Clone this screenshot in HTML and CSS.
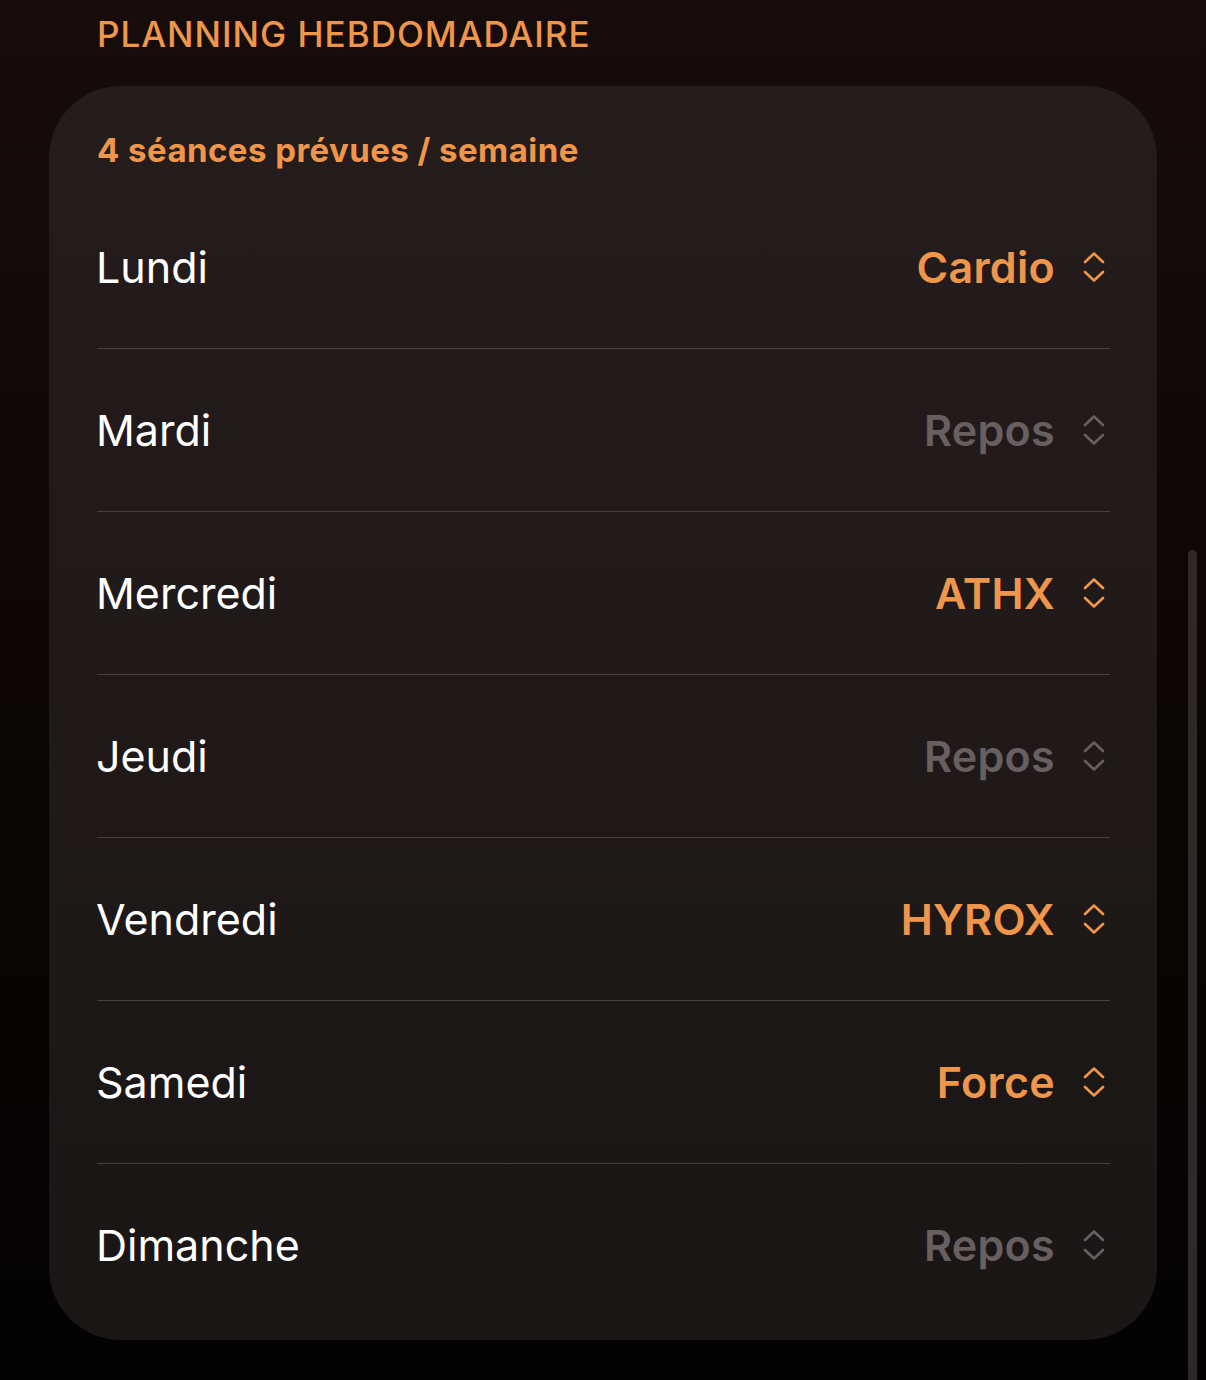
FILE: index.html
```html
<!DOCTYPE html>
<html lang="fr">
<head>
  <meta charset="UTF-8">
  <meta name="viewport" content="width=device-width, initial-scale=1.0">
  <title>Planning hebdomadaire</title>
  <link rel="stylesheet" href="styles.css">
</head>
<body>
  <h2 class="section-title">PLANNING HEBDOMADAIRE</h2>

  <div class="card">
    <p class="summary">4 séances prévues / semaine</p>

    <div class="row">
      <span class="day">Lundi</span>
      <span class="pick active">Cardio
        <svg class="updown" viewBox="0 0 22 30"><path d="M2 10 L11 1.5 L20 10 M2 20 L11 28.5 L20 20"/></svg>
      </span>
    </div>
    <div class="row">
      <span class="day">Mardi</span>
      <span class="pick">Repos
        <svg class="updown" viewBox="0 0 22 30"><path d="M2 10 L11 1.5 L20 10 M2 20 L11 28.5 L20 20"/></svg>
      </span>
    </div>
    <div class="row">
      <span class="day">Mercredi</span>
      <span class="pick active">ATHX
        <svg class="updown" viewBox="0 0 22 30"><path d="M2 10 L11 1.5 L20 10 M2 20 L11 28.5 L20 20"/></svg>
      </span>
    </div>
    <div class="row">
      <span class="day">Jeudi</span>
      <span class="pick">Repos
        <svg class="updown" viewBox="0 0 22 30"><path d="M2 10 L11 1.5 L20 10 M2 20 L11 28.5 L20 20"/></svg>
      </span>
    </div>
    <div class="row">
      <span class="day">Vendredi</span>
      <span class="pick active">HYROX
        <svg class="updown" viewBox="0 0 22 30"><path d="M2 10 L11 1.5 L20 10 M2 20 L11 28.5 L20 20"/></svg>
      </span>
    </div>
    <div class="row">
      <span class="day">Samedi</span>
      <span class="pick active">Force
        <svg class="updown" viewBox="0 0 22 30"><path d="M2 10 L11 1.5 L20 10 M2 20 L11 28.5 L20 20"/></svg>
      </span>
    </div>
    <div class="row">
      <span class="day">Dimanche</span>
      <span class="pick">Repos
        <svg class="updown" viewBox="0 0 22 30"><path d="M2 10 L11 1.5 L20 10 M2 20 L11 28.5 L20 20"/></svg>
      </span>
    </div>
  </div>

  <div class="scrollbar"></div>
</body>
</html>
```

FILE: styles.css
```css
html, body {
    height: 100%;
}

body {
    font-family: Inter, "Noto Sans", sans-serif;
    background: linear-gradient(#170c0c, #0a0505 60%, #030202);
    margin: 0;
    padding: 14px 49px 0;
    box-sizing: border-box;
    color: #fff;
    overflow: hidden;
}

.section-title {
    margin: 0 0 32px 48px;
    font-size: 35px;
    line-height: 40px;
    font-weight: 500;
    letter-spacing: 1px;
    color: #f0964a;
}

.card {
    background: linear-gradient(#251c1c, #1a1616);
    border-radius: 72px;
    padding: 44px 47px 14px 48px;
}

.summary {
    margin: 0 0 16px;
    font-size: 33px;
    line-height: 40px;
    font-weight: 700;
    letter-spacing: 0.45px;
    color: #f0964a;
}

.row {
    height: 162px;
    display: flex;
    align-items: center;
    justify-content: space-between;
}

.row + .row {
    border-top: 1px solid #47403f;
}

.day {
    font-size: 43px;
    font-weight: 400;
    margin-left: -1px;
}

.pick {
    display: flex;
    align-items: center;
    gap: 28px;
    font-size: 43px;
    font-weight: 600;
    letter-spacing: 0.3px;
    color: #675f60;
}

.pick.active {
    color: #f0964a;
}

.updown {
    width: 22px;
    height: 30px;
    fill: none;
    stroke: currentColor;
    stroke-width: 2.6;
    stroke-linecap: round;
    stroke-linejoin: round;
    margin-right: 5px;
}

.scrollbar {
    position: absolute;
    left: 1188px;
    top: 550px;
    width: 9px;
    height: 840px;
    border-radius: 5px;
    background: #2e2828;
}
```
